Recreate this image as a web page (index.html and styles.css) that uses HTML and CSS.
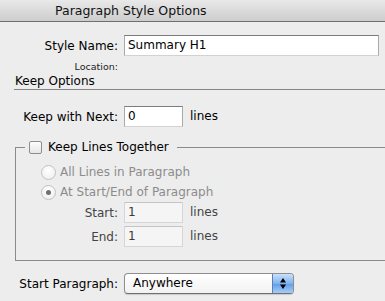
FILE: index.html
```html
<!DOCTYPE html>
<html>
<head>
<meta charset="utf-8">
<link rel="stylesheet" href="styles.css">
</head>
<body>
<div class="window">
  <div class="titlebar">Paragraph Style Options</div>

  <div class="row row-name">
    <span class="lbl">Style Name:</span>
    <div class="field field-name">Summary H1</div>
  </div>
  <div class="location">Location:</div>

  <div class="section-title">Keep Options</div>

  <div class="row row-next">
    <span class="lbl">Keep with Next:</span>
    <div class="field field-short">0</div>
    <span class="unit">lines</span>
  </div>

  <fieldset class="group">
    <legend class="group-legend">
      <span class="checkbox"></span>
      <span class="legend-text">Keep Lines Together</span>
    </legend>
    <div class="radio-row first">
      <span class="radio"></span>
      <span class="radio-text">All Lines in Paragraph</span>
    </div>
    <div class="radio-row">
      <span class="radio radio-on"></span>
      <span class="radio-text">At Start/End of Paragraph</span>
    </div>
    <div class="row row-inner row-start">
      <span class="lbl lbl-inner dim">Start:</span>
      <div class="field field-short disabled">1</div>
      <span class="unit dim">lines</span>
    </div>
    <div class="row row-inner row-end">
      <span class="lbl lbl-inner dim">End:</span>
      <div class="field field-short disabled">1</div>
      <span class="unit dim">lines</span>
    </div>
  </fieldset>

  <div class="row row-para">
    <span class="lbl">Start Paragraph:</span>
    <div class="popup">
      <span class="popup-text">Anywhere</span>
      <span class="stepper">
        <svg width="20" height="19" viewBox="0 0 20 19">
          <path d="M10 4 L13 8.5 L7 8.5 Z" fill="#000"/>
          <path d="M10 15 L13 10.5 L7 10.5 Z" fill="#000"/>
        </svg>
      </span>
    </div>
  </div>
</div>
</body>
</html>
```

FILE: styles.css
```css
html, body {
  margin: 0;
  padding: 0;
}
body {
  background: #ededed;
  font-family: "DejaVu Sans", "Verdana", sans-serif;
  font-size: 12px;
  color: #000;
  overflow: hidden;
  width: 385px;
  height: 301px;
}
.window {
  width: 385px;
}
.titlebar {
  height: 21px;
  line-height: 21px;
  font-size: 12.5px;
  padding-left: 55px;
  background: linear-gradient(#e9e9e9, #cdcdcd);
  border-bottom: 1px solid #6f6f6f;
  color: #111;
}
.row {
  display: flex;
  align-items: center;
  height: 21px;
}
.lbl {
  width: 118px;
  text-align: right;
  line-height: 15px;
  margin-right: 6px;
  flex: none;
  position: relative;
  top: 1px;
}
.row-name {
  margin-top: 13px;
}
.field {
  box-sizing: border-box;
  height: 21px;
  line-height: 19px;
  padding: 0 3px;
  background: #fff;
  border: 1px solid #a9a9a9;
  border-top-color: #7c7c7c;
  border-bottom-color: #d2d2d2;
  font-size: 12px;
}
.field-name {
  width: 255px;
}
.field-short {
  width: 59px;
}
.field.disabled {
  background: #f5f5f5;
  border-color: #d6d6d6;
  border-top-color: #c4c4c4;
  color: #3a3a3a;
}
.unit {
  margin-left: 7px;
  line-height: 15px;
}
.dim {
  color: #444;
}
.location {
  width: 118px;
  text-align: right;
  font-size: 9.5px;
  line-height: 11px;
  margin-top: 5px;
  color: #222;
}
.section-title {
  margin: 2px 0 0 14px;
  padding-left: 1px;
  line-height: 15px;
  border-bottom: 1px solid #858585;
}
.row-next {
  margin-top: 16px;
}
.group {
  margin: 13px 0 0 15px;
  padding: 0 0 13px 0;
  border: 1px solid #8a8a8a;
  border-right: none;
  min-width: 0;
}
.group-legend {
  margin-left: 9px;
  padding: 0 8px 0 4px;
  display: flex;
  align-items: center;
  line-height: 15px;
}
.checkbox {
  box-sizing: border-box;
  width: 13px;
  height: 13px;
  border: 1px solid #8d8d8d;
  border-radius: 2px;
  background: linear-gradient(#fdfdfd, #e6e6e6);
  margin-right: 6px;
}
.radio-row {
  display: flex;
  align-items: center;
  height: 20px;
  padding-left: 25px;
  color: #8c8c8c;
}
.radio-row.first {
  margin-top: 7px;
}
.radio {
  box-sizing: border-box;
  width: 15px;
  height: 15px;
  border-radius: 50%;
  border: 1px solid #c2c2c2;
  background: radial-gradient(circle at 50% 35%, #ffffff, #ececec);
  margin-right: 4px;
  display: flex;
  align-items: center;
  justify-content: center;
}
.radio-on::after {
  content: "";
  width: 5px;
  height: 5px;
  border-radius: 50%;
  background: #707070;
}
.row-inner .lbl-inner {
  width: 102px;
}
.row-end {
  margin-top: 3px;
}
.row-para {
  margin-top: 12px;
}
.popup {
  box-sizing: border-box;
  width: 170px;
  height: 21px;
  display: flex;
  align-items: stretch;
  border: 1px solid #8f8f8f;
  border-bottom-color: #6f6f6f;
  border-radius: 4px;
  background: linear-gradient(#ffffff, #f2f2f2);
  box-shadow: 0 1px 1px rgba(0,0,0,0.15);
  overflow: hidden;
}
.popup-text {
  flex: 1;
  padding-left: 8px;
  line-height: 19px;
}
.stepper {
  width: 20px;
  border-left: 1px solid #5b7fb8;
  background: linear-gradient(#c9e1fb, #7fb3ef 50%, #5e9de8 51%, #a6cdf6);
  display: flex;
  align-items: center;
  justify-content: center;
}
```
